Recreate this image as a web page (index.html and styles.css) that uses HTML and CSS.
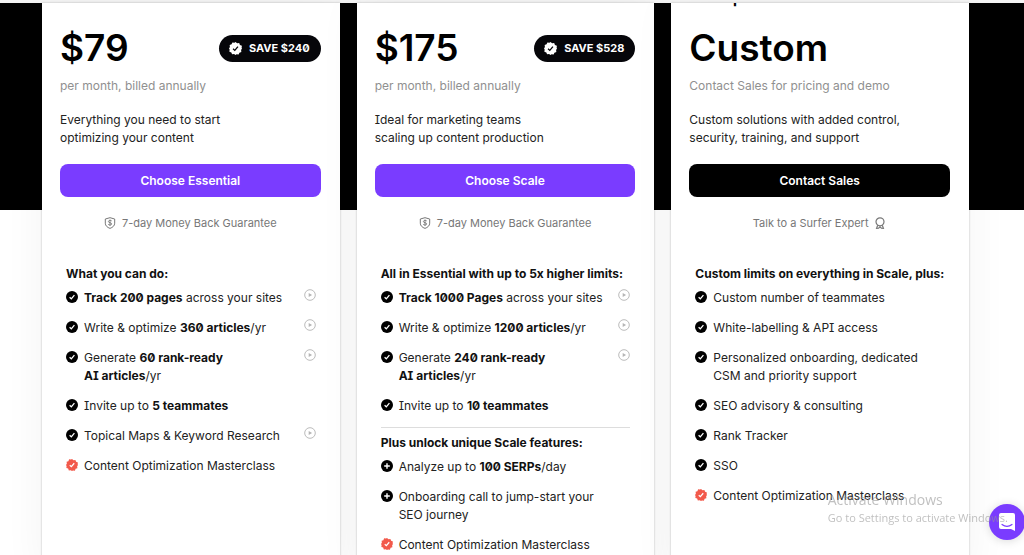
FILE: index.html
```html
<!DOCTYPE html>
<html lang="en">
  <head>
    <meta charset="UTF-8" />
    <meta name="viewport" content="width=device-width, initial-scale=1.0" />
    <title>Pricing</title>
    <link rel="stylesheet" href="styles.css">
  </head>
  <body>
    <!-- shared icons -->
    <svg class="sprite" aria-hidden="true">
      <symbol id="check" viewBox="0 0 12 12">
        <circle cx="6" cy="6" r="6" fill="#000" />
        <path d="M3.6 6.3 5.3 7.8 8.4 4.2" fill="none" stroke="#fff" stroke-width="1.3" />
      </symbol>
      <symbol id="plus" viewBox="0 0 12 12">
        <circle cx="6" cy="6" r="6" fill="#000" />
        <path d="M6 3.2v5.6M3.2 6h5.6" stroke="#fff" stroke-width="1.4" />
      </symbol>
      <symbol id="seal" viewBox="0 0 24 24">
        <path stroke="none" fill="currentColor" d="M12 0l3 2.400 3.800-.5 1.400 3.600 3.600 1.400-.5 3.800L24 12l-1.700 2.600.5 3.700-3.600 1.400-1.400 3.600-3.800-.5L12 24l-2.600-1.700-3.700.5-1.400-3.600-3.600-1.400.5-3.800L0 12l1.700-2.600-.5-3.700 3.600-1.400L6.200.7l3.800.5z" />
        <path d="M7.500 12.500l3.200 3L16.500 8.500" fill="none" stroke-width="2.400" />
      </symbol>
      <symbol id="play" viewBox="0 0 12 12">
        <circle cx="6" cy="6" r="5.300" fill="none" stroke="#bbb" />
        <path d="M4.700 3.900v4.200L8.100 6z" fill="#b5b5b5" />
      </symbol>
      <symbol id="shield" viewBox="0 0 12 12">
        <path d="M6 .7 10.700 2v4.200c0 2.500-2 4.200-4.700 5.200C3.300 10.400 1.300 8.700 1.300 6.200V2z" fill="none" stroke="#777" />
        <path d="M7.700 3.900C6.800 3.100 4.400 3.200 4.400 4.600c0 1.500 3.300.8 3.300 2.300 0 1.400-2.500 1.400-3.500.5M6 2.600v6.300" fill="none" stroke="#777" stroke-width=".9" />
      </symbol>
      <symbol id="award" viewBox="0 0 12 12">
        <circle cx="6" cy="4.800" r="4" fill="none" stroke="#777" stroke-width="1.200" />
        <path d="M3.700 8.200 2.600 11.300l2-.2L6 9.800l1.400 1.300 2 .2L8.300 8.200" fill="none" stroke="#777" stroke-width="1.200" />
      </symbol>
    </svg>

    <div class="topbar"></div>
    <main class="pricing">
      <section class="plan">
        <h2 class="plan-name">Essential</h2>
        <div class="price-row">
          <div class="price">$79</div>
          <div class="save"><svg class="save-icon"><use href="#seal" /></svg>SAVE $240</div>
        </div>
        <p class="billing">per month, billed annually</p>
        <p class="about">Everything you need to start<br>optimizing your content</p>
        <button class="cta">Choose Essential</button>
        <p class="note"><svg class="icon"><use href="#shield" /></svg>7-day Money Back Guarantee</p>
        <div class="features">
          <h3>What you can do:</h3>
          <ul>
            <li><svg class="icon"><use href="#check" /></svg><span><b>Track 200 pages</b> across your sites</span><svg class="icon play"><use href="#play" /></svg></li>
            <li><svg class="icon"><use href="#check" /></svg><span>Write &amp; optimize <b>360 articles</b>/yr</span><svg class="icon play"><use href="#play" /></svg></li>
            <li><svg class="icon"><use href="#check" /></svg><span>Generate <b>60 rank-ready<br>AI articles</b>/yr</span><svg class="icon play"><use href="#play" /></svg></li>
            <li><svg class="icon"><use href="#check" /></svg><span>Invite up to <b>5 teammates</b></span></li>
            <li><svg class="icon"><use href="#check" /></svg><span>Topical Maps &amp; Keyword Research</span><svg class="icon play"><use href="#play" /></svg></li>
            <li><svg class="icon course"><use href="#seal" /></svg><span>Content Optimization Masterclass</span></li>
          </ul>
        </div>
      </section>

      <section class="plan">
        <h2 class="plan-name">Scale</h2>
        <div class="price-row">
          <div class="price">$175</div>
          <div class="save"><svg class="save-icon"><use href="#seal" /></svg>SAVE $528</div>
        </div>
        <p class="billing">per month, billed annually</p>
        <p class="about">Ideal for marketing teams<br>scaling up content production</p>
        <button class="cta">Choose Scale</button>
        <p class="note"><svg class="icon"><use href="#shield" /></svg>7-day Money Back Guarantee</p>
        <div class="features">
          <h3>All in Essential with up to 5x higher limits:</h3>
          <ul>
            <li><svg class="icon"><use href="#check" /></svg><span><b>Track 1000 Pages</b> across your sites</span><svg class="icon play"><use href="#play" /></svg></li>
            <li><svg class="icon"><use href="#check" /></svg><span>Write &amp; optimize <b>1200 articles</b>/yr</span><svg class="icon play"><use href="#play" /></svg></li>
            <li><svg class="icon"><use href="#check" /></svg><span>Generate <b>240 rank-ready<br>AI articles</b>/yr</span><svg class="icon play"><use href="#play" /></svg></li>
            <li><svg class="icon"><use href="#check" /></svg><span>Invite up to <b>10 teammates</b></span></li>
          </ul>
          <h3 class="extra">Plus unlock unique Scale features:</h3>
          <ul>
            <li><svg class="icon"><use href="#plus" /></svg><span>Analyze up to <b>100 SERPs</b>/day</span></li>
            <li><svg class="icon"><use href="#plus" /></svg><span>Onboarding call to jump-start your<br>SEO journey</span></li>
            <li><svg class="icon course"><use href="#seal" /></svg><span>Content Optimization Masterclass</span></li>
          </ul>
        </div>
      </section>

      <section class="plan">
        <h2 class="plan-name">Enterprise</h2>
        <div class="price-row">
          <div class="price">Custom</div>
        </div>
        <p class="billing">Contact Sales for pricing and demo</p>
        <p class="about">Custom solutions with added control,<br>security, training, and support</p>
        <button class="cta dark">Contact Sales</button>
        <p class="note">Talk to a Surfer Expert<svg class="icon"><use href="#award" /></svg></p>
        <div class="features">
          <h3>Custom limits on everything in Scale, plus:</h3>
          <ul>
            <li><svg class="icon"><use href="#check" /></svg><span>Custom number of teammates</span></li>
            <li><svg class="icon"><use href="#check" /></svg><span>White-labelling &amp; API access</span></li>
            <li><svg class="icon"><use href="#check" /></svg><span>Personalized onboarding, dedicated<br>CSM and priority support</span></li>
            <li><svg class="icon"><use href="#check" /></svg><span>SEO advisory &amp; consulting</span></li>
            <li><svg class="icon"><use href="#check" /></svg><span>Rank Tracker</span></li>
            <li><svg class="icon"><use href="#check" /></svg><span>SSO</span></li>
            <li><svg class="icon course"><use href="#seal" /></svg><span>Content Optimization Masterclass</span></li>
          </ul>
        </div>
      </section>
    </main>

    <button class="chat" aria-label="Open chat">
      <svg width="18" height="18" viewBox="0 0 18 18">
        <path d="M3 0h12a2 2 0 0 1 2 2v16l-4-2H3a2 2 0 0 1-2-2V2a2 2 0 0 1 2-2z" fill="#fff" />
        <path d="M4 11.500c3 2.300 7 2.300 10 0" fill="none" stroke="#7a3cff" stroke-width="1.200" stroke-linecap="round" />
      </svg>
    </button>
    <div class="watermark">
      <div class="watermark-title">Activate Windows</div>
      <div>Go to Settings to activate Windows.</div>
    </div>
  </body>
</html>
```
FILE: styles.css
```css
* {
  box-sizing: border-box;
}
body {
  font-family: Inter, "Liberation Sans", sans-serif;
  font-feature-settings: "zero", "cv08";
  font-size: 12px;
  line-height: 18px;
  margin: 0;
  color: #222;
  background-color: #fff;
  height: 100vh;
  overflow: hidden;
}
h2,
h3,
p,
ul {
  margin: 0;
  padding: 0;
}
.sprite {
  display: none;
}
.topbar {
  height: 3px;
  background-color: #f5f5f5;
}
.pricing {
  display: grid;
  grid-template-columns: repeat(3, 1fr);
  gap: 17px;
  min-height: 100vh;
  padding: 0 55px 0 42px;
  background: linear-gradient(#000, #000) top / 100% 207px no-repeat;
}
.plan {
  padding: 0 19px 20px 18px;
  background-color: #fff;
  box-shadow: 0 0 2px rgba(0, 0, 0, 0.25), 0 0 40px rgba(0, 0, 0, 0.05);
}
.plan-name {
  display: flex;
  align-items: flex-end;
  height: 5px;
  overflow: hidden;
  font-size: 17px;
  line-height: 22px;
  font-weight: 600;
  color: #000;
}
.price-row {
  display: flex;
  align-items: center;
  justify-content: space-between;
  height: 80px;
  margin-bottom: -11px;
}
.price {
  font-size: 37px;
  line-height: 48px;
  font-weight: 600;
  color: #000;
}
.save {
  display: flex;
  align-items: center;
  gap: 7px;
  height: 27px;
  padding: 0 11px 0 10px;
  border-radius: 14px;
  font-size: 11px;
  font-weight: 700;
  color: #fff;
  background-color: #06060a;
}
.save-icon {
  width: 13px;
  height: 13px;
  stroke: #06060a;
}
.billing {
  color: #909090;
}
.about {
  margin-top: 16px;
}
.cta {
  display: block;
  width: 100%;
  height: 33px;
  margin-top: 17px;
  border: none;
  border-radius: 8px;
  font-family: inherit;
  font-size: 12px;
  font-weight: 600;
  color: #fff;
  background-color: #7a3cff;
  cursor: pointer;
}
.cta.dark {
  background-color: #000;
}
.note {
  display: flex;
  align-items: center;
  justify-content: center;
  gap: 6px;
  margin-top: 17px;
  font-size: 11px;
  color: #777;
}
.features {
  padding: 33px 5px 0 6px;
}
.features h3 {
  font-size: 12px;
  font-weight: 700;
  white-space: nowrap;
  color: #111;
}
.features h3.extra {
  margin-top: 12px;
  padding-top: 6px;
  border-top: 1px solid #ddd;
}
.features ul {
  display: grid;
  gap: 12px;
  margin-top: 6px;
  list-style: none;
}
.features li {
  display: flex;
  gap: 6px;
}
.features b {
  font-weight: 700;
  color: #111;
}
.icon {
  flex: none;
  width: 12px;
  height: 12px;
}
.features .icon {
  margin-top: 2px;
}
.features .play {
  margin: 0 0 0 auto;
}
.course {
  color: #f2594b;
  stroke: #fff;
}
.chat {
  position: fixed;
  right: -1px;
  bottom: 15px;
  display: grid;
  place-items: center;
  width: 36px;
  height: 36px;
  padding: 0;
  border: none;
  border-radius: 50%;
  background-color: #7a3cff;
  box-shadow: 0 1px 10px rgba(0, 0, 0, 0.15);
  cursor: pointer;
}
.watermark {
  position: fixed;
  right: 16px;
  bottom: 28px;
  font-family: "Open Sans", sans-serif;
  font-size: 11px;
  line-height: 18px;
  color: rgba(150, 150, 150, 0.6);
  pointer-events: none;
}
.watermark-title {
  font-size: 14px;
}
```
